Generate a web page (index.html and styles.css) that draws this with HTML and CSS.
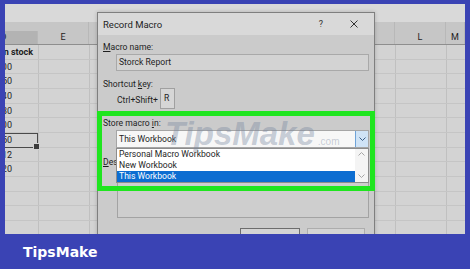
FILE: index.html
```html
<!DOCTYPE html>
<html lang="en">
<head>
  <meta charset="UTF-8" />
  <meta name="viewport" content="width=device-width, initial-scale=1.0" />
  <title>Record Macro</title>
  <link rel="stylesheet" href="styles.css">
</head>
<body>
  <div class="frame">
    <div class="screen">
      <div class="ribbon"></div>
      <div class="heads">
        <div class="hd on">D</div>
        <div class="hd">E</div>
        <div class="hd">F</div>
        <div class="hd">G</div>
        <div class="hd">H</div>
        <div class="hd">I</div>
        <div class="hd">J</div>
        <div class="hd">K</div>
        <div class="hd">L</div>
        <div class="hd">M</div>
      </div>
      <div class="sheet">
        <div class="cell head">In stock</div>
        <div class="cell">100</div>
        <div class="cell">50</div>
        <div class="cell">140</div>
        <div class="cell">30</div>
        <div class="cell">200</div>
        <div class="cell pick">50</div>
        <div class="cell">12</div>
        <div class="cell">120</div>
      </div>

      <div class="dialog">
        <div class="dlg-title">
          <span class="title-text">Record Macro</span>
          <span class="help">?</span>
          <svg class="close" width="8" height="8" viewBox="0 0 8 8">
            <path d="M0.5 0.5 L7.5 7.5 M7.5 0.5 L0.5 7.5" stroke="#333" stroke-width="1" fill="none"/>
          </svg>
        </div>
        <div class="dlg-body">
          <div class="lbl lbl-first"><u>M</u>acro name:</div>
          <div class="field">Storck Report</div>
          <div class="lbl lbl-key">Shortcut <u>k</u>ey:</div>
          <div class="keyrow">
            <span class="ctrl">Ctrl+Shift+</span>
            <span class="keybox">R</span>
          </div>
          <div class="lbl lbl-store">Store macro <u>i</u>n:</div>
          <div class="combo">
            <span>This Workbook</span>
            <span class="drop">
              <svg width="7" height="4" viewBox="0 0 7 4"><path d="M0.5 0.5 L3.5 3.5 L6.5 0.5" stroke="#3b5f86" fill="none"/></svg>
            </span>
          </div>
          <div class="lbl lbl-desc"><u>D</u>escription:</div>
          <div class="desc"></div>
          <div class="buttons">
            <div class="btn ok">OK</div>
            <div class="btn cancel">Cancel</div>
          </div>
        </div>

        <div class="list">
          <div class="items">
            <div class="item">Personal Macro Workbook</div>
            <div class="item">New Workbook</div>
            <div class="item sel">This Workbook</div>
          </div>
          <div class="scroll">
            <svg width="7" height="4" viewBox="0 0 7 4"><path d="M0.5 3.5 L3.5 0.5 L6.5 3.5" stroke="#a6a6a6" fill="none"/></svg>
            <svg width="7" height="4" viewBox="0 0 7 4"><path d="M0.5 0.5 L3.5 3.5 L6.5 0.5" stroke="#a6a6a6" fill="none"/></svg>
          </div>
        </div>
        <div class="focus"></div>
      </div>

      <div class="watermark">TipsMake<span>.com</span></div>
    </div>
    <div class="footer">TipsMake</div>
  </div>
</body>
</html>
```

FILE: styles.css
```css
* {
  margin: 0;
  padding: 0;
  box-sizing: border-box;
}
body {
  width: 470px;
  height: 269px;
  overflow: hidden;
  background-color: #3a43b4;
  font-family: Roboto, "Liberation Sans", sans-serif;
  color: #1e1e1e;
}
.frame {
  padding: 4px 5px 0 5px;
}
.screen {
  position: relative;
  height: 230px;
  background-color: #d3d3d3;
  overflow: hidden;
}
.ribbon {
  height: 18px;
  background-color: #d9d9d9;
}
/* column letters */
.heads {
  display: grid;
  grid-template-columns: 68px repeat(8, 51px) 1fr;
  margin-left: -35px;
  height: 23px;
  background-color: #c6c6c6;
  border-bottom: 1px solid #8e8e8e;
}
.hd {
  padding-top: 9px;
  line-height: 13px;
  font-size: 9px;
  text-align: center;
  border-right: 1px solid #b8b8b8;
}
.hd.on {
  background-color: #b3b3b3;
  margin-top: 9px;
  padding-top: 0;
}
/* cells */
.sheet {
  display: flex;
  flex-direction: column;
  margin-left: -35px;
  height: 189px;
  background-image:
    repeating-linear-gradient(to bottom, transparent 0 13.67px, #c5c5c5 13.67px 14.67px),
    repeating-linear-gradient(to right, transparent 0 50px, #c0c0c0 50px 51px);
  background-position: 0 0, 18px 0;
}
.cell {
  width: 68px;
  height: 14.67px;
  line-height: 14.67px;
  padding-right: 26px;
  font-size: 9px;
  text-align: right;
  white-space: nowrap;
}
.cell.head {
  padding: 0 0 0 31px;
  text-align: left;
  font-weight: bold;
}
.cell.pick {
  position: relative;
  border: 1px solid #4a4a4a;
  line-height: 12.67px;
  padding-right: 25px;
}
.cell.pick::after {
  content: "";
  position: absolute;
  right: -3px;
  bottom: -3px;
  width: 5px;
  height: 5px;
  background-color: #3c3c3c;
  border: 1px solid #d3d3d3;
}
/* dialog window */
.dialog {
  position: absolute;
  left: 92px;
  top: 8px;
  width: 278px;
  height: 240px;
  background-color: #cbcbcb;
  border: 1px solid #7f7f7f;
  box-shadow: 0 0 4px rgba(0, 0, 0, 0.2);
}
.dlg-title {
  display: flex;
  align-items: center;
  height: 22px;
  padding-left: 5px;
  background-color: #d9d9d9;
  font-size: 9.5px;
}
.title-text {
  flex: 1;
}
.help {
  margin-right: 27px;
  font-size: 9px;
  color: #333;
}
.close {
  margin-right: 16px;
}
.dlg-body {
  padding-left: 5px;
  font-size: 8.6px;
}
.lbl {
  height: 12px;
  line-height: 12px;
}
.lbl u {
  text-decoration: underline;
}
.lbl-first {
  margin-top: 6px;
}
.field {
  margin: 1px 0 0 13px;
  width: 253px;
  height: 17px;
  line-height: 15px;
  padding-left: 2px;
  background-color: #d3d3d3;
  border: 1px solid #a9a9a9;
}
.lbl-key {
  margin-top: 7px;
}
.keyrow {
  display: flex;
  align-items: flex-start;
  margin: -2px 0 0 14px;
  height: 21px;
}
.ctrl {
  margin-top: 6px;
  line-height: 12px;
}
.keybox {
  margin-left: 2px;
  width: 15px;
  height: 21px;
  padding: 3px 0 0 3px;
  line-height: 12px;
  background-color: #d6d6d6;
  border: 1px solid #a0a0a0;
}
.lbl-store {
  margin-top: 8px;
}
.combo {
  display: flex;
  justify-content: space-between;
  align-items: center;
  margin: 1px 0 0 13px;
  width: 253px;
  height: 18px;
  padding-left: 2px;
  background-color: #f7f7f7;
  border: 1px solid #a5a5a5;
}
.drop {
  display: flex;
  align-items: center;
  justify-content: center;
  width: 13px;
  height: 16px;
  background-color: #cfe3f6;
  border-left: 1px solid #6fa3d8;
}
.lbl-desc {
  margin-top: 8px;
}
.desc {
  margin: -2px 0 0 14px;
  width: 252px;
  height: 52px;
  border: 1px solid #a3a3a3;
  background-color: #cecece;
}
.buttons {
  display: flex;
  gap: 7px;
  margin: 10px 0 0 137px;
}
.btn {
  height: 22px;
  line-height: 20px;
  text-align: center;
  background-color: #d4d4d4;
}
.ok {
  width: 60px;
  border: 1px solid #6d6d6d;
}
.cancel {
  width: 58px;
  border: 1px solid #adadad;
}
/* opened dropdown */
.list {
  position: absolute;
  left: 18px;
  top: 135px;
  width: 253px;
  height: 35px;
  display: flex;
  background-color: #ffffff;
  border: 1px solid #8c8c8c;
  font-size: 8.6px;
}
.items {
  flex: 1;
}
.item {
  height: 11px;
  line-height: 11px;
  padding-left: 2px;
}
.item.sel {
  background-color: #0c6dd1;
  color: #ffffff;
}
.scroll {
  display: flex;
  flex-direction: column;
  justify-content: space-between;
  align-items: center;
  width: 13px;
  padding: 3px 0 4px;
  background-color: #f4f4f4;
}
/* highlight frame */
.focus {
  position: absolute;
  left: -1px;
  top: 98px;
  width: 278px;
  height: 80px;
  border: 5px solid #1fe51f;
}
.watermark {
  position: absolute;
  left: 160px;
  top: 113px;
  font-family: "Liberation Sans", sans-serif;
  font-size: 33px;
  line-height: 33px;
  font-weight: bold;
  font-style: italic;
  color: rgba(120, 135, 160, 0.4);
  pointer-events: none;
}
.watermark span {
  font-size: 10px;
  font-style: normal;
  font-weight: normal;
  margin-left: 3px;
}
.footer {
  display: flex;
  align-items: center;
  height: 35px;
  padding-left: 18px;
  font-family: "DejaVu Sans", sans-serif;
  font-size: 14px;
  font-weight: bold;
  color: #ffffff;
}
```
